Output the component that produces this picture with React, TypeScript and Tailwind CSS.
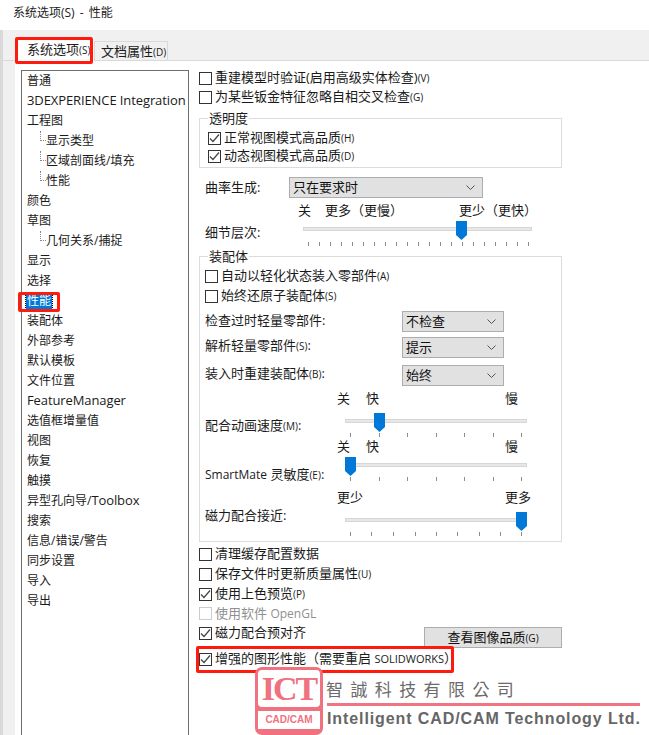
import type { ReactNode } from "react";

function Latin({ children }: { children: ReactNode }) {
  return <span className="text-[13px] tracking-[-0.1px]">{children}</span>;
}

const navItems: { label: ReactNode; sub?: boolean; active?: boolean }[] = [
  { label: "普通" },
  { label: <Latin>3DEXPERIENCE Integration</Latin> },
  { label: "工程图" },
  { label: "显示类型", sub: true },
  { label: "区域剖面线/填充", sub: true },
  { label: "性能", sub: true },
  { label: "颜色" },
  { label: "草图" },
  { label: "几何关系/捕捉", sub: true },
  { label: "显示" },
  { label: "选择" },
  { label: "性能", active: true },
  { label: "装配体" },
  { label: "外部参考" },
  { label: "默认模板" },
  { label: "文件位置" },
  { label: <Latin>FeatureManager</Latin> },
  { label: "选值框增量值" },
  { label: "视图" },
  { label: "恢复" },
  { label: "触摸" },
  { label: <>异型孔向导/<Latin>Toolbox</Latin></> },
  { label: "搜索" },
  { label: "信息/错误/警告" },
  { label: "同步设置" },
  { label: "导入" },
  { label: "导出" },
];

function Key({ children }: { children: ReactNode }) {
  return <span className="text-[10px]">{children}</span>;
}

function Check({
  label,
  checked,
  disabled,
  className = "h-5",
}: {
  label: ReactNode;
  checked?: boolean;
  disabled?: boolean;
  className?: string;
}) {
  return (
    <div className={`flex items-center ${className} ${disabled ? "text-[#8f8f8f]" : ""}`}>
      <span
        className={`w-[13px] h-[13px] border bg-white shrink-0 flex items-center justify-center ${
          disabled ? "border-[#cccccc]" : "border-[#333333]"
        }`}
      >
        {checked && (
          <svg width="11" height="11" viewBox="0 0 11 11" fill="none" stroke="#444444" strokeWidth="1.2">
            <path d="M1 5.5 L4 8.5 L10 1.5" />
          </svg>
        )}
      </span>
      <span className="ml-[3px] whitespace-nowrap">{label}</span>
    </div>
  );
}

function Select({ value, className }: { value: string; className: string }) {
  return (
    <div
      className={`h-[21px] bg-[#e1e1e1] border border-[#adadad] flex items-center justify-between pl-[3px] pr-[7px] ${className}`}
    >
      <span className="text-[#111111]">{value}</span>
      <svg width="9" height="6" viewBox="0 0 9 6" fill="none" stroke="#555555" strokeWidth="1">
        <path d="M0.5 0.5 L4.5 4.5 L8.5 0.5" />
      </svg>
    </div>
  );
}

function Slider({ width, thumb, ticks, tickTop }: { width: number; thumb: number; ticks: number[]; tickTop: number }) {
  return (
    <div className="relative h-6 shrink-0" style={{ width }}>
      <div className="absolute left-0 right-0 top-[6px] h-1 bg-[#e7e7e7] border border-[#d6d6d6]" />
      <svg className="absolute top-0" style={{ left: thumb - 5.5 }} width="11" height="19" viewBox="0 0 11 19">
        <path d="M0 0 H11 V14 L5.5 19 L0 14 Z" fill="#0078d7" />
      </svg>
      {ticks.map((t) => (
        <span key={t} className="absolute w-px h-[4px] bg-[#8c8c8c]" style={{ left: t, top: tickTop }} />
      ))}
    </div>
  );
}

function Group({ title, className, children }: { title: string; className: string; children: ReactNode }) {
  return (
    <div className={`relative border border-[#dcdcdc] ${className}`}>
      <span className="absolute left-[8px] top-[-11px] h-5 leading-5 px-[1px] bg-white">{title}</span>
      {children}
    </div>
  );
}

const detailTicks = Array.from({ length: 21 }, (_, i) => 5 + i * 11);

export default function App() {
  return (
    <div className="relative w-[649px] h-[735px] overflow-hidden bg-white flex flex-col text-[12px] text-[#1a1a1a] font-['Open_Sans','Noto_Sans_CJK_SC',sans-serif]">
      <div className="h-[30px] shrink-0 pl-[13px] pt-[4px] text-[#222222]">
        系统选项(S)<span className="px-[2px]"> - </span>性能
      </div>

      <div className="flex-1 min-h-0 bg-[#f0f0f0] border-l-[3px] border-[#d9d9d9] flex flex-col">
        {/* tabs */}
        <div className="h-[31px] shrink-0 flex items-end pl-[14px] border-b border-[#d9d9d9] text-[13px]">
          <div className="w-[77px] h-[24px] bg-white pl-[10px] leading-[24px] -mb-px">
            系统选项<Key>(S)</Key>
          </div>
          <div className="w-[74px] h-[19px] bg-[#f0f0f0] border border-b-0 border-[#d9d9d9] pl-[6px] leading-[18px]">
            文档属性<Key>(D)</Key>
          </div>
        </div>

        <div className="flex-1 min-h-0 ml-[12px] bg-white flex pl-[6px]">
          {/* nav list */}
          <div className="w-[168px] mt-[9px] -mb-px border border-[#6e6e6e] shrink-0">
            {navItems.map((item, i) => (
              <div key={i} className={`h-5 flex items-center whitespace-nowrap ${item.sub ? "pl-[24px]" : "pl-[5px]"}`}>
                {item.sub && <span className="w-[6px] h-[10px] -ml-[6px] mb-[10px] border-l border-b border-dotted border-[#888888]" />}
                {item.active ? (
                  <span className="bg-[#0078d7] text-white h-4 leading-4 px-[1px] -ml-[1px] outline-1 outline-dotted outline-black">
                    {item.label}
                  </span>
                ) : (
                  <span>{item.label}</span>
                )}
              </div>
            ))}
          </div>

          {/* options */}
          <div className="ml-[10px] w-[363px] shrink-0 pt-[7px] text-[13px]">
            <Check label={<>重建模型时验证(启用高级实体检查)<Key>(V)</Key></>} />
            <Check className="h-[18px]" label={<>为某些钣金特征忽略自相交叉检查<Key>(G)</Key></>} />

            <Group title="透明度" className="mt-[12px] h-[50px] pl-[8px] pt-[10px]">
              <Check className="h-[18px]" checked label={<>正常视图模式高品质<Key>(H)</Key></>} />
              <Check className="h-[18px]" checked label={<>动态视图模式高品质<Key>(D)</Key></>} />
            </Group>

            <div className="mt-[9px] flex items-center pl-[6px]">
              <span className="w-[84px]">曲率生成:</span>
              <Select value="只在要求时" className="w-[194px]" />
            </div>

            <div className="mt-[3px] h-5 flex items-center pl-[99px]">
              <span className="w-[27px]">关</span>
              <span className="w-[134px]">更多（更慢）</span>
              <span>更少（更快）</span>
            </div>

            <div className="flex items-center pl-[6px] mt-[-1px] h-[25px]">
              <span className="w-[98px] pt-[1px]">细节层次:</span>
              <Slider width={229} thumb={158} ticks={detailTicks} tickTop={21} />
            </div>

            <Group title="装配体" className="mt-[11px] h-[286px] pl-[5px] pt-[9px]">
              <Check label={<>自动以轻化状态装入零部件<Key>(A)</Key></>} />
              <Check label={<>始终还原子装配体<Key>(S)</Key></>} />

              <div className="mt-[5px] flex">
                <span className="w-[197px] leading-[18px]">检查过时轻量零部件:</span>
                <Select value="不检查" className="w-[102px]" />
              </div>
              <div className="mt-[5px] flex">
                <span className="w-[197px] leading-[16px]">解析轻量零部件<Key>(S)</Key>:</span>
                <Select value="提示" className="w-[102px]" />
              </div>
              <div className="mt-[7px] flex">
                <span className="w-[197px] leading-[16px]">装入时重建装配体<Key>(B)</Key>:</span>
                <Select value="始终" className="w-[102px]" />
              </div>

              <div className="mt-[4px] h-[18px] flex items-center pl-[132px]">
                <span className="w-[29px]">关</span>
                <span className="w-[139px]">快</span>
                <span>慢</span>
              </div>
              <div className="mt-[5px] flex items-center">
                <span className="w-[140px] pt-[1px]">配合动画速度<Key>(M)</Key>:</span>
                <Slider width={182} thumb={34.5} ticks={[5, 34, 62, 91, 119, 148, 176]} tickTop={20} />
              </div>

              <div className="mt-px h-[18px] flex items-center pl-[132px]">
                <span className="w-[29px]">关</span>
                <span className="w-[139px]">快</span>
                <span>慢</span>
              </div>
              <div className="mt-px flex items-start">
                <span className="w-[140px] mt-[8px]">
                  <span className="text-[12px]">SmartMate</span> 灵敏度<Key>(E)</Key>:
                </span>
                <Slider width={182} thumb={5.5} ticks={[5, 34, 62, 91, 119, 148, 176]} tickTop={20} />
              </div>

              <div className="mt-[4px] h-[18px] flex items-center pl-[132px]">
                <span className="w-[168px]">更少</span>
                <span>更多</span>
              </div>
              <div className="mt-[5px] flex items-start">
                <span className="w-[140px] -mt-[6px]">磁力配合接近:</span>
                <Slider width={182} thumb={176.5} ticks={[5, 26, 48, 70, 91, 112, 134, 155, 176]} tickTop={20} />
              </div>
            </Group>

            <div className="mt-[2px]">
              <Check label="清理缓存配置数据" />
              <Check label={<>保存文件时更新质量属性<Key>(U)</Key></>} />
              <Check checked label={<>使用上色预览<Key>(P)</Key></>} />
              <Check disabled className="h-[19px]" label={<>使用软件 <span className="text-[12px]">OpenGL</span></>} />
              <div className="flex justify-between items-start h-[25px]">
                <Check checked label="磁力配合预对齐" />
                <button className="mt-[4px] w-[138px] h-[21px] bg-[#e1e1e1] border border-[#adadad] text-[#111111]">
                  查看图像品质<Key>(G)</Key>
                </button>
              </div>
              <Check
                checked
                className="mt-px h-5"
                label={<>增强的图形性能（需要重启 <span className="text-[11px]">SOLIDWORKS</span>）</>}
              />
            </div>
          </div>
        </div>
      </div>

      {/* red annotations */}
      <div className="absolute left-[15px] top-[37px] w-[78px] h-[27px] border-[3px] border-[#ff1a0d] rounded-[2px]" />
      <div className="absolute left-[18px] top-[292px] w-[42px] h-[20px] border-[3px] border-[#ff1a0d] rounded-[2px]" />
      <div className="absolute left-[196px] top-[646px] w-[258px] h-[27px] border-[3px] border-[#ff1a0d] rounded-[2px]" />

      {/* watermark logo */}
      <div className="absolute left-[255px] top-[667px] w-[68px] h-[68px] rounded-[7px] bg-[#f0717f] p-[3px] flex flex-col gap-[4px]">
        <div className="h-[37px] bg-white rounded-[4px] text-[#f0717f] font-bold text-[34px] leading-[37px] text-center tracking-[-2px] whitespace-nowrap font-['Liberation_Serif',serif]">
          ICT
        </div>
        <div className="h-[18px] bg-white text-[#f0717f] font-bold text-[10px] leading-[18px] text-center font-['Liberation_Sans',sans-serif]">
          CAD/CAM
        </div>
      </div>
      <div className="absolute left-[326px] top-[677px] h-[23px] leading-[23px] text-[#6b6b6b] text-[17px] tracking-[7.4px] whitespace-nowrap font-['Noto_Sans_CJK_TC',sans-serif]">
        智誠科技有限公司
      </div>
      <div className="absolute left-[327px] top-[703px] w-[313px] h-[3px] bg-[#ef7582]" />
      <div className="absolute left-[327px] top-[709px] leading-[20px] text-[#666666] font-bold text-[16px] tracking-[0.9px] whitespace-nowrap font-['Liberation_Sans',sans-serif]">
        Intelligent CAD/CAM Technology Ltd.
      </div>
    </div>
  );
}
